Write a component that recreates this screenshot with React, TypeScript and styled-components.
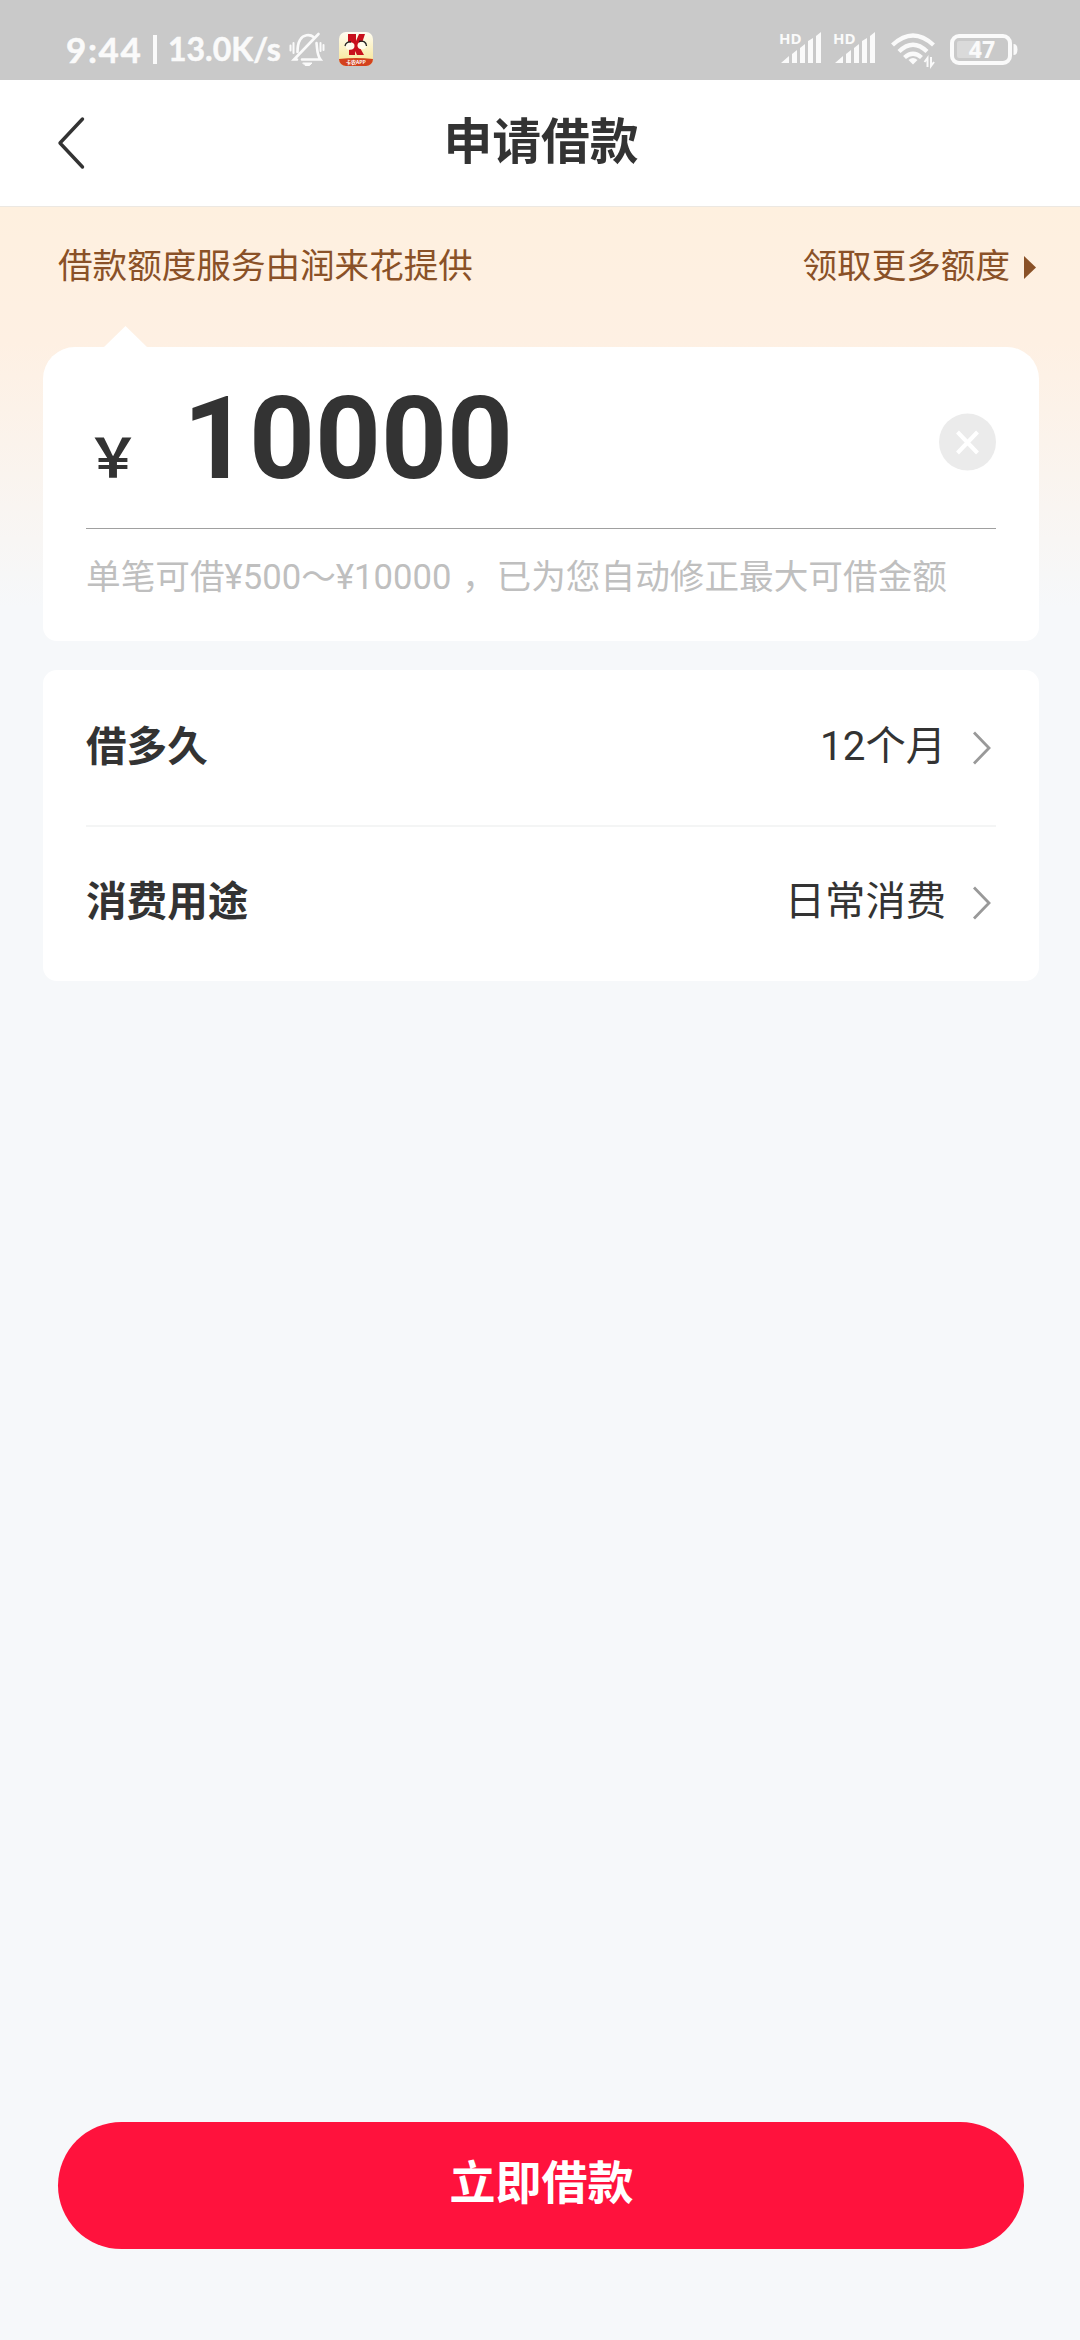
import React from "react";
import styled, { createGlobalStyle } from "styled-components";

const GlobalStyle = createGlobalStyle`
  * { box-sizing: border-box; }
  body {
    margin: 0;
    background: #f6f8fa;
    font-family: Roboto, "Noto Sans CJK SC", sans-serif;
    color: #333;
  }
`;

const Screen = styled.div`
  width: 1080px;
  height: 2340px;
  display: flex;
  flex-direction: column;
  overflow: hidden;
`;

const StatusBar = styled.div`
  height: 80px;
  flex: none;
  padding: 20px 62px 0 66px;
  display: flex;
  justify-content: space-between;
  align-items: flex-start;
  background: #c9c9c9;
  color: #fafafa;
  font-family: Lato, sans-serif;
  font-weight: 700;
  line-height: 60px;
`;

const StatusGroup = styled.div`
  display: flex;
  align-items: flex-start;
`;

const StatusText = styled.span<{ $size: number; $width: number; $spacing?: number }>`
  width: ${(p) => p.$width}px;
  font-size: ${(p) => p.$size}px;
  letter-spacing: ${(p) => p.$spacing ?? 0}px;
  line-height: 58px;
  white-space: nowrap;
  -webkit-text-stroke: 0.5px #fafafa;
`;

const StatusDivider = styled.span`
  width: 4px;
  height: 29px;
  margin: 15px 11px 0 0;
  background: #fafafa;
`;

const NavBar = styled.header`
  height: 127px;
  flex: none;
  padding: 0 54px 0 56px;
  display: grid;
  grid-template-columns: 60px 1fr 60px;
  align-items: center;
  background: #fff;
  border-bottom: 1px solid #ece8e2;
`;

const Title = styled.h1`
  margin: 0;
  text-align: center;
  font-size: 48.8px;
  line-height: 70px;
  font-weight: 700;
`;

const Content = styled.main`
  flex: 1;
  padding: 0 41px 0 43px;
  display: flex;
  flex-direction: column;
  background: linear-gradient(#fef0df 0, #fef0e3 135px, #f6f8fa 400px) no-repeat;
`;

const Banner = styled.div`
  height: 140px;
  padding: 34px 3px 0 15px;
  display: flex;
  justify-content: space-between;
  font-size: 34.6px;
  line-height: 50px;
  color: #8a5127;
`;

const MoreLink = styled.span`
  display: flex;
  gap: 14px;
`;

const Triangle = styled.i`
  margin-top: 15px;
  width: 12px;
  height: 23px;
  background: #8a5127;
  clip-path: polygon(0 0, 100% 50%, 0 100%);
`;

const Card = styled.section<{ $radius: string }>`
  position: relative;
  padding: 0 43px;
  background: #fff;
  border-radius: ${(p) => p.$radius};
`;

const Notch = styled.i`
  position: absolute;
  left: 60px;
  top: -21px;
  width: 45px;
  height: 22px;
  background: #fff;
  clip-path: polygon(50% 0, 100% 100%, 0 100%);
`;

const AmountRow = styled.div`
  height: 182px;
  display: flex;
  align-items: baseline;
  border-bottom: 1px solid #a0a0a0;
`;

const Currency = styled.span`
  width: 97px;
  font-family: "Noto Sans CJK SC", sans-serif;
  font-size: 54px;
  font-weight: 700;
`;

const Amount = styled.span`
  flex: 1;
  font-size: 115px;
  line-height: 183px;
  font-weight: 700;
`;

const ClearButton = styled.button`
  width: 57px;
  height: 58px;
  padding: 0;
  margin-top: 66px;
  align-self: flex-start;
  border: 0;
  background: none;
`;

const Hint = styled.p`
  margin: 0;
  height: 112px;
  padding-top: 23px;
  font-size: 34.65px;
  line-height: 50px;
  word-spacing: 2px;
  color: #bfbfbf;
  white-space: nowrap;
`;

const OptionsCard = styled(Card)`
  margin-top: 29px;
`;

const OptionRow = styled.div<{ $divided?: boolean }>`
  height: ${(p) => (p.$divided ? 157 : 154)}px;
  padding: ${(p) => (p.$divided ? 48 : 46)}px 5px 0 0;
  display: flex;
  align-items: flex-start;
  font-size: 40.3px;
  line-height: 58px;
  border-bottom: ${(p) => (p.$divided ? "2px solid #f4f5f5" : "0")};
`;

const OptionLabel = styled.span`
  flex: 1;
  font-size: 40.6px;
  font-weight: 700;
`;

const OptionValue = styled.span`
  margin-right: 27px;
`;

const Arrow = styled.svg`
  width: 18px;
  height: 34px;
  margin-top: 13px;
`;

const SubmitButton = styled.button`
  margin: auto 15px 91px 15px;
  height: 127px;
  padding: 0 0 13px 1px;
  border: 0;
  border-radius: 64px;
  background: #ff123d;
  color: #fff;
  font: 700 46px/66px "Noto Sans CJK SC", sans-serif;
`;

const MutedBell = () => (
  <svg width="36" height="36" viewBox="0 0 36 36" fill="none" stroke="#fafafa" strokeWidth="2.6" strokeLinecap="round">
    <path d="M8.500 20 C8.500 17 8.500 12 11 8 C14 2.500 21 2 24.500 5" />
    <path d="M27.500 11 C28.500 19 28 23 31.500 27.500 H13" />
    <path d="M29.500 2 L5 27.500 H8" />
    <path d="M4.500 11 V21 M1.500 13.500 V18.500 M31.500 11 V19 M34.500 13 V18" strokeWidth="2" />
    <path d="M14 31 H23 L20.500 33.500 H16.500 Z" fill="#fafafa" strokeWidth="1" />
  </svg>
);

const AppBadge = () => (
  <svg width="34" height="34" viewBox="0 0 34 34">
    <defs>
      <linearGradient id="badge" x2="0" y2="1">
        <stop stopColor="#fffdf2" />
        <stop offset="1" stopColor="#f7e48f" />
      </linearGradient>
      <clipPath id="badgeClip"><rect width="34" height="34" rx="7" /></clipPath>
    </defs>
    <g clipPath="url(#badgeClip)">
      <rect width="34" height="34" fill="url(#badge)" />
      <path d="M9 2 H17 V9 L20 2 H26 L23 11 L20 14 L25 23 H18 L16 19 V23 H10 V18 L14 14 L9 10 Z" fill="#c8101c" />
      <ellipse cx="11" cy="14" rx="4.500" ry="3.700" fill="#fffbea" />
      <ellipse cx="23" cy="13.500" rx="4.500" ry="3.700" fill="#fffbea" />
      <path d="M6 14 Q7 9.500 12 10 M20 9.500 Q27 8 27.500 14" stroke="#222" strokeWidth="1.300" fill="none" />
      <path d="M0 27 Q17 25 34 27 V34 H0 Z" fill="#d3411d" />
      <text x="17" y="32" textAnchor="middle" fontSize="5" fill="#fff" fontFamily="Noto Sans CJK SC">卡农APP</text>
    </g>
  </svg>
);

const IconSvg = styled.svg`
  overflow: visible;
`;

const Signal = () => (
  <IconSvg width="42" height="34" viewBox="0 0 42 34" fill="#fafafa">
    <text x="-1" y="11.500" fontSize="15" fontFamily="Open Sans" fontWeight="700">HD</text>
    <path d="M1 31 L9 24 V31 Z M12 22 L17 18 V31 H12 Z M20 16 L25 12 V31 H20 Z M28 9 L33 6 V31 H28 Z M36 4 L41 0 V31 H36 Z" />
  </IconSvg>
);

const Wifi = () => (
  <svg width="44" height="36" viewBox="0 0 44 36" fill="none" stroke="#fafafa" strokeWidth="4.300">
    <path d="M1.500 12 Q22 -7 42.500 12" />
    <path d="M8 18.500 Q22 5 36 18.500" />
    <path d="M13.500 24.500 Q22 17 30.500 24.500" />
    <path d="M17.500 27 Q22 23 26.500 27 L22 31.500 Z" fill="#fafafa" stroke="none" />
    <path d="M36.500 34 V25 L33.500 29 M40 24 V33 L43 29" strokeWidth="2" />
  </svg>
);

const Battery = () => (
  <svg width="68" height="32" viewBox="0 0 68 32">
    <rect x="2" y="2" width="58" height="27" rx="7" fill="none" stroke="#fafafa" strokeWidth="4" />
    <rect x="7" y="7" width="24" height="17" rx="2" fill="#dadada" />
    <path d="M63.500 10 Q67.500 10 67.500 15.500 Q67.500 21 63.500 21 Z" fill="#fafafa" />
    <text x="32" y="24" textAnchor="middle" fontFamily="Open Sans" fontWeight="700" fontSize="23" fill="#fafafa">47</text>
  </svg>
);

const IconSlot = styled.span<{ $top: number; $left: number }>`
  display: flex;
  margin-top: ${(p) => p.$top}px;
  margin-left: ${(p) => p.$left}px;
`;

const options = [
  { label: "借多久", value: "12个月" },
  { label: "消费用途", value: "日常消费" },
];

export default function App() {
  return (
    <Screen>
      <GlobalStyle />
      <StatusBar>
        <StatusGroup>
          <StatusText $size={35} $width={87} $spacing={1.6}>9:44</StatusText>
          <StatusDivider />
          <StatusText $size={32} $width={115}>13.0K/s</StatusText>
          <IconSlot $top={12} $left={6}><MutedBell /></IconSlot>
          <IconSlot $top={12} $left={14}><AppBadge /></IconSlot>
        </StatusGroup>
        <StatusGroup>
          <IconSlot $top={12} $left={0}><Signal /></IconSlot>
          <IconSlot $top={12} $left={12}><Signal /></IconSlot>
          <IconSlot $top={13} $left={15}><Wifi /></IconSlot>
          <IconSlot $top={14} $left={15}><Battery /></IconSlot>
        </StatusGroup>
      </StatusBar>
      <NavBar>
        <svg width="32" height="54" viewBox="0 0 32 54" fill="none" stroke="#333" strokeWidth="3.4" strokeLinecap="round" strokeLinejoin="round">
          <path d="M26.500 3 L4 27 L26.500 51" />
        </svg>
        <Title>申请借款</Title>
      </NavBar>
      <Content>
        <Banner>
          <span>借款额度服务由润来花提供</span>
          <MoreLink>
            领取更多额度
            <Triangle />
          </MoreLink>
        </Banner>
        <Card $radius="32px 32px 14px 14px">
          <Notch />
          <AmountRow>
            <Currency>{"\uFFE5"}</Currency>
            <Amount>10000</Amount>
            <ClearButton aria-label="清除">
              <svg width="57" height="58" viewBox="0 0 57 58">
                <circle cx="28.500" cy="29" r="28.500" fill="#ebebeb" />
                <path d="M18.500 19 L38.500 40 M38.500 19 L18.500 40" stroke="#fff" strokeWidth="4" />
              </svg>
            </ClearButton>
          </AmountRow>
          <Hint>{"单笔可借¥500\uFF5E¥10000 \uFF0C已为您自动修正最大可借金额"}</Hint>
        </Card>
        <OptionsCard $radius="14px">
          {options.map((option, index) => (
            <OptionRow key={option.label} $divided={index < options.length - 1}>
              <OptionLabel>{option.label}</OptionLabel>
              <OptionValue>{option.value}</OptionValue>
              <Arrow viewBox="0 0 18 34" fill="none" stroke="#999" strokeWidth="2.800">
                <path d="M1 1.500 L16 17 L1 32.500" />
              </Arrow>
            </OptionRow>
          ))}
        </OptionsCard>
        <SubmitButton>立即借款</SubmitButton>
      </Content>
    </Screen>
  );
}
